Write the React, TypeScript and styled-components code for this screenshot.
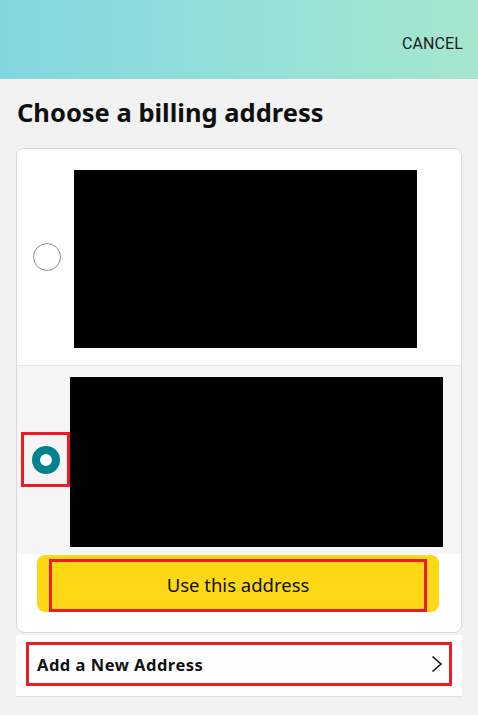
import styled, { createGlobalStyle } from 'styled-components';

const GlobalStyle = createGlobalStyle`
  html, body {
    margin: 0;
    padding: 0;
    background: #f2f2f2;
  }
  body {
    font-family: "Noto Sans", "Liberation Sans", sans-serif;
    color: #0f1111;
  }
`;

const Page = styled.div`
  width: 478px;
  min-height: 715px;
  background: #f2f2f2;
`;

const Header = styled.header`
  height: 79px;
  background: linear-gradient(90deg, #82d6df 0%, #93e0d9 50%, #a6e6ce 100%);
  display: flex;
  align-items: flex-end;
  justify-content: flex-end;
  padding: 0 15px 26px 0;
  box-sizing: border-box;
`;

const Cancel = styled.button`
  font-family: Roboto, "Liberation Sans", sans-serif;
  font-size: 16px;
  color: #1a1a1a;
  background: none;
  border: 0;
  padding: 0;
  letter-spacing: 0.1px;
`;

const Title = styled.h1`
  margin: 0;
  padding: 15px 17px 18px;
  font-size: 25.5px;
  line-height: 36px;
  font-weight: 700;
`;

const Card = styled.div`
  margin: 0 16px;
  background: #fff;
  border: 1px solid #d9d9d9;
  border-radius: 8px;
  overflow: hidden;
`;

const Row = styled.div<{ $selected?: boolean; $pad: string }>`
  display: flex;
  align-items: center;
  padding: ${({ $pad }) => $pad};
  background: ${({ $selected }) => ($selected ? '#f5f5f5' : '#fff')};
  & + & {
    border-top: 1px solid #e6e6e6;
  }
`;

const RadioSlot = styled.div<{ $marked?: boolean }>`
  display: flex;
  align-items: center;
  justify-content: center;
  box-sizing: border-box;
  width: ${({ $marked }) => ($marked ? '49px' : '28px')};
  height: ${({ $marked }) => ($marked ? '55px' : '28px')};
  margin: ${({ $marked }) => ($marked ? '0 0 5px 0' : '0 13px 4px 16px')};
  border: ${({ $marked }) => ($marked ? '3px solid #ec1c24' : '0')};
  flex: none;
`;

const Radio = styled.span<{ $checked?: boolean }>`
  box-sizing: border-box;
  width: 28px;
  height: 28px;
  border-radius: 50%;
  border: ${({ $checked }) => ($checked ? '8.5px solid #00818f' : '1.5px solid #8a8a8a')};
  background: #fff;
`;

const Redacted = styled.div<{ $w: number; $h: number }>`
  width: ${({ $w }) => $w}px;
  height: ${({ $h }) => $h}px;
  background: #000;
  flex: none;
`;

const Footer = styled.div`
  padding: 1px 22px 20px 20px;
`;

const UseButton = styled.button`
  display: block;
  width: 100%;
  height: 57px;
  box-sizing: border-box;
  padding: 4px 12px 0;
  border: 0;
  border-radius: 8px;
  background: #fed816;
`;

const Highlight = styled.span`
  display: flex;
  align-items: center;
  justify-content: center;
  height: 100%;
  box-sizing: border-box;
  border: 3px solid #ec1c24;
  font-family: "Noto Sans", "Liberation Sans", sans-serif;
  font-size: 18.5px;
  color: #0f1111;
  padding-bottom: 3px;
`;

const AddRow = styled.div`
  margin: 2px 16px 0;
  background: #fff;
  padding: 7px 10px 10px;
  box-shadow: 0 1px 1px rgba(0, 0, 0, 0.06);
`;

const AddBox = styled.div`
  display: flex;
  align-items: center;
  justify-content: space-between;
  height: 44px;
  box-sizing: border-box;
  border: 3px solid #ec1c24;
  padding: 0 6px 0 8px;
`;

const AddLabel = styled.span`
  font-size: 16.5px;
  font-weight: 700;
  letter-spacing: 0.5px;
`;

export default function App() {
  return (
    <Page>
      <GlobalStyle />
      <Header>
        <Cancel>CANCEL</Cancel>
      </Header>
      <Title>Choose a billing address</Title>
      <Card>
        <Row $pad="21px 0 17px 0">
          <RadioSlot>
            <Radio />
          </RadioSlot>
          <Redacted $w={343} $h={178} />
        </Row>
        <Row $selected $pad="11px 0 7px 4px">
          <RadioSlot $marked>
            <Radio $checked />
          </RadioSlot>
          <Redacted $w={373} $h={170} />
        </Row>
        <Footer>
          <UseButton>
            <Highlight>Use this address</Highlight>
          </UseButton>
        </Footer>
      </Card>
      <AddRow>
        <AddBox>
          <AddLabel>Add a New Address</AddLabel>
          <svg width="12" height="18" viewBox="0 0 12 18" fill="none">
            <path d="M1.5 1.5 L10 9 L1.5 16.5" stroke="#111" strokeWidth="1.6" />
          </svg>
        </AddBox>
      </AddRow>
    </Page>
  );
}
